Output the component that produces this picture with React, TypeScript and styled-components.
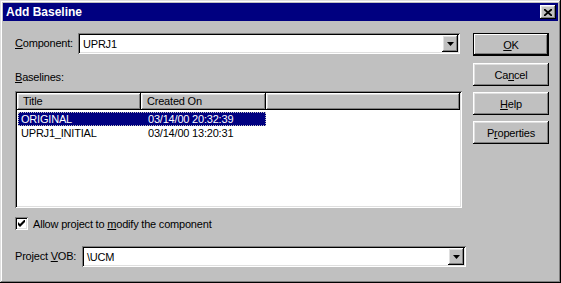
import styled, { createGlobalStyle } from 'styled-components';

const GlobalStyle = createGlobalStyle`
  html, body {
    margin: 0;
    padding: 0;
    background: #c0c0c0;
  }
  body {
    font-family: 'Liberation Sans', Arial, sans-serif;
    font-size: 11px;
    letter-spacing: -0.2px;
    color: #000;
  }
  * { box-sizing: border-box; }
`;

const raised = `
  background: #c0c0c0;
  box-shadow: inset -1px -1px #000, inset 1px 1px #fff, inset -2px -2px #808080, inset 2px 2px #dfdfdf;
`;

const sunken = `
  background: #fff;
  box-shadow: inset 1px 1px #808080, inset -1px -1px #fff, inset 2px 2px #000, inset -2px -2px #dfdfdf;
`;

const Window = styled.div`
  width: 561px;
  height: 283px;
  padding: 3px;
  display: flex;
  flex-direction: column;
  background: #c0c0c0;
  box-shadow: inset -1px -1px #000, inset 1px 1px #dfdfdf, inset -2px -2px #808080, inset 2px 2px #fff;
`;

const TitleBar = styled.div`
  height: 18px;
  padding: 0 2px 0 3px;
  display: flex;
  align-items: center;
  justify-content: space-between;
  background: #000080;
  color: #fff;
  font-weight: bold;
  font-size: 12px;
  letter-spacing: 0;
`;

const CloseButton = styled.div`
  width: 16px;
  height: 14px;
  display: flex;
  align-items: center;
  justify-content: center;
  ${raised}
`;

const Body = styled.div`
  flex: 1;
  display: flex;
  padding: 12px 9px 0 12px;
`;

const MainColumn = styled.div`
  width: 451px;
  display: flex;
  flex-direction: column;
`;

const FieldRow = styled.div<{ $top?: number }>`
  display: flex;
  align-items: center;
  height: 21px;
  margin-top: ${(p) => p.$top ?? 0}px;
`;

const Label = styled.span<{ $width?: number }>`
  width: ${(p) => (p.$width ? `${p.$width}px` : 'auto')};
  line-height: 13px;
  white-space: nowrap;
`;

const U = styled.span`
  text-decoration: underline;
  text-underline-offset: 1px;
`;

const Combo = styled.div<{ $width: number }>`
  width: ${(p) => p.$width}px;
  height: 21px;
  padding: 2px;
  display: flex;
  align-items: center;
  ${sunken}
`;

const ComboText = styled.span`
  flex: 1;
  padding-left: 3px;
`;

const DropButton = styled.div`
  width: 16px;
  height: 17px;
  display: flex;
  align-items: center;
  justify-content: center;
  ${raised}
`;

const SectionLabel = styled.div`
  margin-top: 17px;
  margin-bottom: 7px;
  line-height: 13px;
`;

const ListView = styled.div`
  width: 447px;
  height: 117px;
  padding: 2px;
  display: flex;
  flex-direction: column;
  ${sunken}
`;

const HeaderRow = styled.div`
  display: flex;
  height: 17px;
`;

const HeaderCell = styled.div<{ $width?: number }>`
  width: ${(p) => (p.$width ? `${p.$width}px` : 'auto')};
  flex: ${(p) => (p.$width ? 'none' : 1)};
  padding-left: 6px;
  line-height: 17px;
  ${raised}
`;

const Rows = styled.div`
  padding-top: 2px;
`;

const Row = styled.div<{ $selected?: boolean }>`
  display: flex;
  width: 248px;
  height: 14px;
  margin-left: 1px;
  line-height: 14px;
  background: ${(p) => (p.$selected ? '#000080' : 'transparent')};
  color: ${(p) => (p.$selected ? '#fff' : '#000')};
  outline: ${(p) => (p.$selected ? '1px dotted #c0c0c0' : 'none')};
  outline-offset: -1px;
`;

const Cell = styled.span<{ $width?: number; $pad: number }>`
  width: ${(p) => (p.$width ? `${p.$width}px` : 'auto')};
  padding-left: ${(p) => p.$pad}px;
  white-space: nowrap;
`;

const CheckRow = styled.label`
  display: flex;
  align-items: center;
  gap: 5px;
  margin-top: 9px;
  height: 13px;
`;

const CheckBox = styled.span`
  width: 13px;
  height: 13px;
  display: flex;
  align-items: center;
  justify-content: center;
  ${sunken}
`;

const ButtonColumn = styled.div`
  margin-left: auto;
  width: 76px;
  display: flex;
  flex-direction: column;
  gap: 6px;
`;

const Button = styled.div<{ $default?: boolean }>`
  height: 23px;
  display: flex;
  align-items: center;
  justify-content: center;
  margin-bottom: ${(p) => (p.$default ? 1 : 0)}px;
  background: #c0c0c0;
  box-shadow: ${(p) =>
    p.$default
      ? 'inset -1px -1px #000, inset 1px 1px #000, inset -2px -2px #000, inset 2px 2px #fff, inset -3px -3px #808080'
      : 'inset -1px -1px #000, inset 1px 1px #fff, inset -2px -2px #808080, inset 2px 2px #dfdfdf'};
`;

const Arrow = () => (
  <svg width="7" height="4" viewBox="0 0 7 4">
    <polygon points="0,0 7,0 3.5,4" fill="#000" />
  </svg>
);

const rows = [
  { title: 'ORIGINAL', created: '03/14/00 20:32:39', selected: true },
  { title: 'UPRJ1_INITIAL', created: '03/14/00 13:20:31', selected: false },
];

export default function App() {
  return (
    <>
      <GlobalStyle />
      <Window>
        <TitleBar>
          <span>Add Baseline</span>
          <CloseButton>
            <svg width="8" height="7" viewBox="0 0 8 7">
              <path d="M0 0 L8 7 M8 0 L0 7" stroke="#000" strokeWidth="1.8" />
            </svg>
          </CloseButton>
        </TitleBar>
        <Body>
          <MainColumn>
            <FieldRow>
              <Label $width={63}>
                <U>C</U>omponent:
              </Label>
              <Combo $width={382}>
                <ComboText>UPRJ1</ComboText>
                <DropButton>
                  <Arrow />
                </DropButton>
              </Combo>
            </FieldRow>

            <SectionLabel>
              <U>B</U>aselines:
            </SectionLabel>

            <ListView>
              <HeaderRow>
                <HeaderCell $width={124}>Title</HeaderCell>
                <HeaderCell $width={125}>Created On</HeaderCell>
                <HeaderCell />
              </HeaderRow>
              <Rows>
                {rows.map((r) => (
                  <Row key={r.title} $selected={r.selected}>
                    <Cell $width={123} $pad={3}>
                      {r.title}
                    </Cell>
                    <Cell $pad={7}>{r.created}</Cell>
                  </Row>
                ))}
              </Rows>
            </ListView>

            <CheckRow>
              <CheckBox>
                <svg width="7" height="7" viewBox="0 0 7 7">
                  <path d="M0 2 L2 4 L7 -1 L7 2 L2 7 L0 5 Z" fill="#000" />
                </svg>
              </CheckBox>
              <span>
                Allow project to <U>m</U>odify the component
              </span>
            </CheckRow>

            <FieldRow $top={16}>
              <Label $width={67}>
                Project <U>V</U>OB:
              </Label>
              <Combo $width={384}>
                <ComboText>\UCM</ComboText>
                <DropButton>
                  <Arrow />
                </DropButton>
              </Combo>
            </FieldRow>
          </MainColumn>

          <ButtonColumn>
            <Button $default>
              <span>
                <U>O</U>K
              </span>
            </Button>
            <Button>
              <span>
                Ca<U>n</U>cel
              </span>
            </Button>
            <Button>
              <span>
                <U>H</U>elp
              </span>
            </Button>
            <Button>
              <span>
                P<U>r</U>operties
              </span>
            </Button>
          </ButtonColumn>
        </Body>
      </Window>
    </>
  );
}
